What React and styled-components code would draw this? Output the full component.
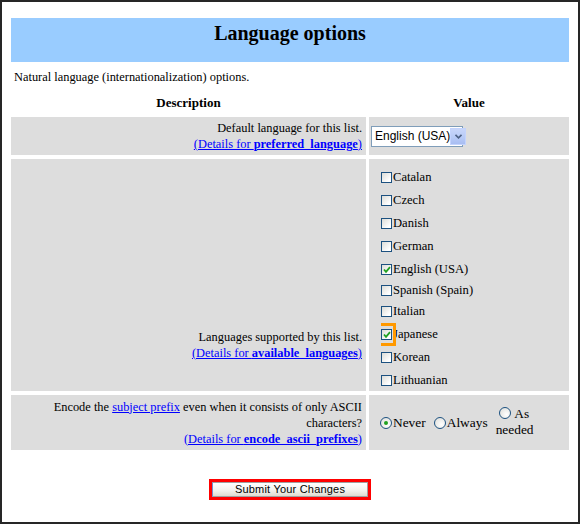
import React from "react";
import styled, { createGlobalStyle } from "styled-components";

const Global = createGlobalStyle`
  html, body { margin: 0; padding: 0; background: #fff; }
  body { font-family: "Liberation Serif", "Times New Roman", serif; font-size: 12.4px; color: #000; }
`;

const Frame = styled.div`
  box-sizing: border-box;
  width: 580px;
  height: 524px;
  border: 2px solid #262626;
  padding: 16px 9px 0 9px;
  display: flex;
  flex-direction: column;
`;

const Banner = styled.div`
  height: 44px;
  box-sizing: border-box;
  background: #99ccff;
  display: flex;
  align-items: flex-start;
  justify-content: center;
  padding-top: 5px;
`;

const Title = styled.h1`
  margin: 0;
  font-size: 20px;
  font-weight: bold;
  line-height: 20px;
`;

const Intro = styled.p`
  margin: 8px 0 0 3px;
  line-height: 15px;
`;

const Grid = styled.div`
  display: grid;
  grid-template-columns: 355px 200px;
  column-gap: 3px;
  row-gap: 4px;
  margin-top: 8px;
`;

const HeadCell = styled.div`
  text-align: center;
  font-weight: bold;
  font-size: 13px;
  height: 19px;
  line-height: 19px;
  margin-bottom: 1px;
`;

const DescCell = styled.div`
  background: #dddddd;
  height: ${(p) => p.$h}px;
  box-sizing: border-box;
  display: flex;
  flex-direction: column;
  justify-content: ${(p) => p.$align || "center"};
  align-items: flex-end;
  text-align: right;
  padding: ${(p) => p.$pad || "0 4px 0 4px"};
  line-height: 16px;
`;

const ValueCell = styled.div`
  background: #dddddd;
  height: ${(p) => p.$h}px;
  box-sizing: border-box;
  display: flex;
  flex-direction: column;
  justify-content: ${(p) => p.$align || "center"};
  padding: ${(p) => p.$pad || "0 0 0 2px"};
`;

const Link = styled.a`
  color: #0000ff;
  text-decoration: underline;
  cursor: pointer;
`;

const SelectBox = styled.div`
  box-sizing: border-box;
  width: 92px;
  height: 21px;
  border: 1px solid #7f9db9;
  background: #fff;
  display: flex;
  align-items: center;
  font-family: "Liberation Sans", Arial, sans-serif;
  font-size: 12px;
  padding-left: 3px;
  justify-content: space-between;
  white-space: nowrap;
`;

const SelectArrow = styled.span`
  width: 16px;
  height: 17px;
  margin-right: 1px;
  flex-shrink: 0;
  background: linear-gradient(#c8d6fa, #b6c9f6 60%, #a8bdf2);
  border: 1px solid #c3d3fd;
  box-sizing: border-box;
  display: flex;
  align-items: center;
  justify-content: center;
`;

const CheckList = styled.div`
  display: flex;
  flex-direction: column;
  padding: 7px 0 0 12px;
`;

const CheckRow = styled.label`
  display: flex;
  align-items: center;
  height: ${(p) => p.$h || 23}px;
  overflow: hidden;
  position: relative;
  font-size: 12.6px;
`;

const Box = styled.span`
  box-sizing: border-box;
  width: 11px;
  height: 11px;
  border: 1px solid #1c5180;
  background: linear-gradient(135deg, #dcdcd7, #fff 80%);
  margin-right: 1px;
  display: flex;
  align-items: center;
  justify-content: center;
  flex-shrink: 0;
`;

const Focus = styled.span`
  position: absolute;
  left: -8px;
  top: 0px;
  width: 23px;
  height: 23px;
  box-sizing: border-box;
  border: 3px solid #ff9900;
`;

const RadioRow = styled.div`
  display: flex;
  align-items: center;
  padding-left: 9px;
  font-size: 13.4px;
`;

const RadioLabel = styled.label`
  display: flex;
  align-items: center;
  margin-right: 8px;
`;

const WrapLabel = styled.label`
  display: block;
  width: 42px;
  line-height: 16px;
  margin-top: -1px;
`;

const Radio = styled.span`
  box-sizing: border-box;
  width: 12px;
  height: 12px;
  border-radius: 50%;
  border: 1px solid #1c5180;
  background: radial-gradient(circle at 65% 65%, #fff, #dcdcd7);
  margin-right: 1px;
  display: inline-flex;
  align-items: center;
  justify-content: center;
  flex-shrink: 0;
  vertical-align: -1px;
  margin-left: ${(p) => (p.$indent ? "3px" : "0")};
`;

const Dot = styled.span`
  width: 4px;
  height: 4px;
  border-radius: 50%;
  background: #21a121;
`;

const Footer = styled.div`
  display: flex;
  justify-content: center;
  margin-top: 29px;
`;

const RedFrame = styled.div`
  border: 3px solid #ff0000;
  display: flex;
`;

const SubmitButton = styled.button`
  width: 156px;
  height: 15px;
  margin: 0;
  padding: 0;
  border: 1px solid #a0a0a0;
  border-left-color: #6f8fd0;
  background: linear-gradient(#ffffff, #f2f1ec 60%, #dedbd0);
  font-family: "Liberation Sans", Arial, sans-serif;
  font-size: 11px;
  line-height: 13px;
  color: #000;
  letter-spacing: 0.2px;
`;

const Check = () => (
  <svg width="8" height="8" viewBox="0 0 8 8">
    <path d="M1 3.5 L3 5.8 L7 1.2" stroke="#21a121" strokeWidth="1.8" fill="none" />
  </svg>
);

const languages = [
  { name: "Catalan" },
  { name: "Czech" },
  { name: "Danish" },
  { name: "German" },
  { name: "English (USA)", checked: true },
  { name: "Spanish (Spain)", h: 19 },
  { name: "Italian" },
  { name: "Japanese", checked: true, focus: true },
  { name: "Korean" },
  { name: "Lithuanian" },
];

export default function App() {
  return (
    <>
      <Global />
      <Frame>
        <Banner>
          <Title>Language options</Title>
        </Banner>
        <Intro>Natural language (internationalization) options.</Intro>
        <Grid>
          <HeadCell>Description</HeadCell>
          <HeadCell>Value</HeadCell>

          <DescCell $h={38}>
            <span>Default language for this list.</span>
            <Link>
              (Details for <b>preferred_language</b>)
            </Link>
          </DescCell>
          <ValueCell $h={38}>
            <SelectBox>
              <span>English (USA)</span>
              <SelectArrow>
                <svg width="7" height="5" viewBox="0 0 7 5">
                  <path d="M0.5 0.8 L3.5 3.8 L6.5 0.8" stroke="#4d6185" strokeWidth="1.6" fill="none" />
                </svg>
              </SelectArrow>
            </SelectBox>
          </ValueCell>

          <DescCell $h={232} $align="flex-end" $pad="0 4px 30px 4px">
            <span>Languages supported by this list.</span>
            <Link>
              (Details for <b>available_languages</b>)
            </Link>
          </DescCell>
          <ValueCell $h={232} $align="flex-start" $pad="0">
            <CheckList>
              {languages.map((l) => (
                <CheckRow key={l.name} $h={l.h}>
                  {l.focus && <Focus />}
                  <Box>{l.checked && <Check />}</Box>
                  <span>{l.name}</span>
                </CheckRow>
              ))}
            </CheckList>
          </ValueCell>

          <DescCell $h={55}>
            <span>
              Encode the <Link>subject prefix</Link> even when it consists of only ASCII
            </span>
            <span>characters?</span>
            <Link>
              (Details for <b>encode_ascii_prefixes</b>)
            </Link>
          </DescCell>
          <ValueCell $h={55}>
            <RadioRow>
              <RadioLabel>
                <Radio>
                  <Dot />
                </Radio>
                Never
              </RadioLabel>
              <RadioLabel>
                <Radio />
                Always
              </RadioLabel>
              <WrapLabel>
                <Radio $indent /> As needed
              </WrapLabel>
            </RadioRow>
          </ValueCell>
        </Grid>
        <Footer>
          <RedFrame>
            <SubmitButton>Submit Your Changes</SubmitButton>
          </RedFrame>
        </Footer>
      </Frame>
    </>
  );
}
